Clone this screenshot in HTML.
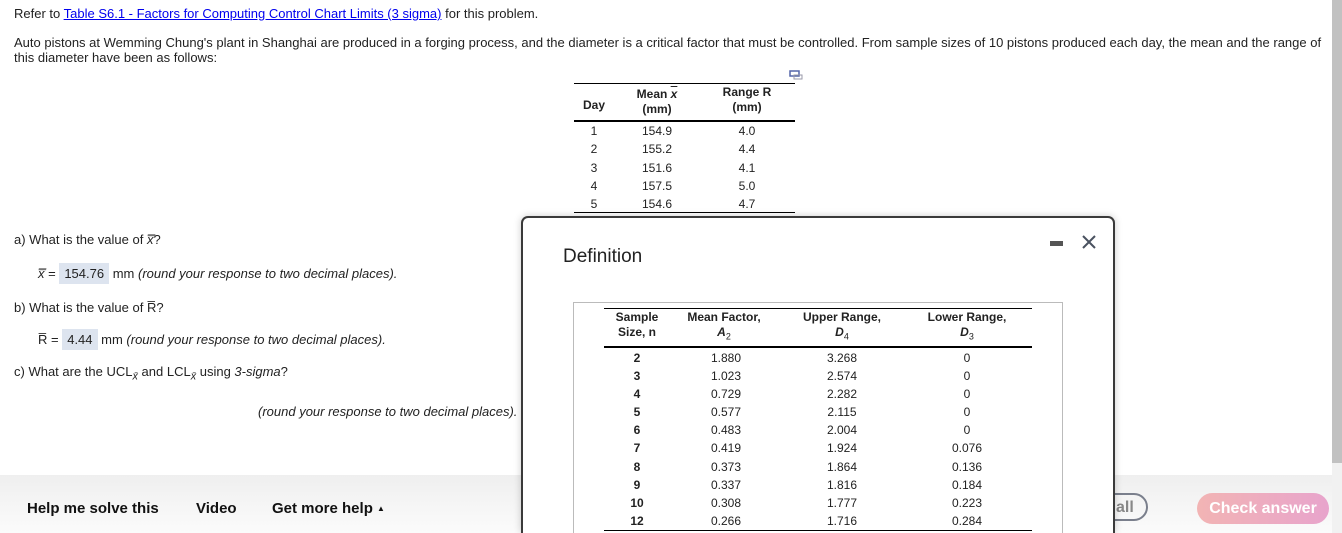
<!DOCTYPE html>
<html style="overflow:hidden;height:533px"><head><style>
body{margin:0;width:1342px;height:533px;overflow:hidden;position:relative;font-family:"Liberation Sans",Arial,sans-serif;font-size:13px;color:#222;background:#fff}
.a{position:absolute;white-space:nowrap}
.c{position:absolute;transform:translateX(-50%);text-align:center;white-space:nowrap;font-size:12px}
.ln{position:absolute;background:#000}
.box{background:#dde4ef;padding:3px 5px}
i{font-style:italic}
</style></head><body>
<div class="a" style="left:14px;top:6px">Refer to <span style="color:#0000ee;text-decoration:underline">Table S6.1 - Factors for Computing Control Chart Limits (3 sigma)</span> for this problem.</div>
<div class="a" style="left:14px;top:35px;line-height:15px">Auto pistons at Wemming Chung's plant in Shanghai are produced in a forging process, and the diameter is a critical factor that must be controlled. From sample sizes of 10 pistons produced each day, the mean and the range of<br>this diameter have been as follows:</div>
<svg class="a" style="left:789px;top:70px" width="14" height="10"><rect x="1" y="1" width="9" height="5" fill="none" stroke="#5566aa" stroke-width="1.5"/><rect x="5" y="5" width="8" height="4" fill="none" stroke="#99a" stroke-width="1"/></svg>
<div class="ln" style="left:574px;top:83px;width:221px;height:1px"></div>
<div class="ln" style="left:574px;top:120px;width:221px;height:2px"></div>
<div class="ln" style="left:574px;top:212px;width:221px;height:1px"></div>
<div class="c" style="left:594px;top:98px;font-weight:bold">Day</div>
<div class="c" style="left:657px;top:87px;font-weight:bold;line-height:15px">Mean <i style="text-decoration:overline">x</i><br>(mm)</div>
<div class="c" style="left:747px;top:85px;font-weight:bold;line-height:15px">Range R<br>(mm)</div>
<div class="c" style="left:594px;top:122px;line-height:18.3px">1<br>2<br>3<br>4<br>5</div>
<div class="c" style="left:657px;top:122px;line-height:18.3px">154.9<br>155.2<br>151.6<br>157.5<br>154.6</div>
<div class="c" style="left:747px;top:122px;line-height:18.3px">4.0<br>4.4<br>4.1<br>5.0<br>4.7</div>

<div class="a" style="left:14px;top:232px">a) What is the value of <i>x̿</i>?</div>
<div class="a" style="left:38px;top:266px"><i>x̿</i> = <span class="box">154.76</span> mm <i>(round your response to two decimal places).</i></div>
<div class="a" style="left:14px;top:300px">b) What is the value of R̅?</div>
<div class="a" style="left:38px;top:332px">R̅ = <span class="box">4.44</span> mm <i>(round your response to two decimal places).</i></div>
<div class="a" style="left:14px;top:364px">c) What are the UCL<sub><i>x̄</i></sub> and LCL<sub><i>x̄</i></sub> using <i>3-sigma</i>?</div>
<div class="a" style="left:258px;top:404px"><i>(round your response to two decimal places).</i></div>

<div class="a" style="left:0;top:475px;width:1332px;height:58px;background:linear-gradient(#efefef,#fbfbfb)"></div>
<div class="a" style="left:27px;top:500px;font-size:15px;font-weight:bold;color:#111">Help me solve this</div>
<div class="a" style="left:196px;top:500px;font-size:15px;font-weight:bold;color:#111">Video</div>
<div class="a" style="left:272px;top:500px;font-size:15px;font-weight:bold;color:#111">Get more help <span style="font-size:8px;vertical-align:2px">▲</span></div>
<div class="a" style="left:1090px;top:493px;width:58px;height:28px;border:2px solid #7a7f8c;border-radius:16px;box-sizing:border-box"></div>
<div class="a" style="left:1116px;top:499px;font-size:16px;font-weight:bold;color:#888">all</div>
<div class="a" style="left:1197px;top:493px;width:132px;height:31px;border-radius:16px;background:linear-gradient(90deg,#f2b4b4,#e8a4cc);color:#fff;font-size:16px;font-weight:bold;text-align:center;line-height:31px">Check answer</div>
<div class="a" style="left:1332px;top:0;width:10px;height:533px;background:#f1f1f1"></div>
<div class="a" style="left:1332px;top:0;width:10px;height:463px;background:#c1c1c1"></div>

<div class="a" style="left:521px;top:216px;width:594px;height:317px;border:2px solid #3a3a3a;border-bottom:none;border-radius:7px 7px 0 0;background:#fff;box-sizing:border-box;box-shadow:0 0 8px rgba(0,0,0,.2)"></div>
<div class="a" style="left:563px;top:246px;font-size:19px;color:#222">Definition</div>
<div class="a" style="left:1050px;top:241px;width:13px;height:5px;background:#555"></div>
<svg class="a" style="left:1081px;top:234px" width="16" height="16"><path d="M2 2L14 14M14 2L2 14" stroke="#4a5260" stroke-width="2"/></svg>
<div class="a" style="left:573px;top:302px;width:490px;height:240px;border:1px solid #bbb;box-sizing:border-box"></div>
<div class="ln" style="left:604px;top:308px;width:428px;height:1px"></div>
<div class="ln" style="left:604px;top:346px;width:428px;height:2px"></div>
<div class="ln" style="left:604px;top:530px;width:428px;height:1px"></div>
<div class="c" style="left:637px;top:310px;font-weight:bold;line-height:15px">Sample<br>Size, n</div>
<div class="c" style="left:724px;top:310px;font-weight:bold;line-height:15px">Mean Factor,<br><i>A</i><sub style="font-size:9px;font-weight:normal">2</sub></div>
<div class="c" style="left:842px;top:310px;font-weight:bold;line-height:15px">Upper Range,<br><i>D</i><sub style="font-size:9px;font-weight:normal">4</sub></div>
<div class="c" style="left:967px;top:310px;font-weight:bold;line-height:15px">Lower Range,<br><i>D</i><sub style="font-size:9px;font-weight:normal">3</sub></div>
<div class="c" style="left:637px;top:349px;line-height:18.1px;font-weight:bold">2<br>3<br>4<br>5<br>6<br>7<br>8<br>9<br>10<br>12</div>
<div class="c" style="left:726px;top:349px;line-height:18.1px">1.880<br>1.023<br>0.729<br>0.577<br>0.483<br>0.419<br>0.373<br>0.337<br>0.308<br>0.266</div>
<div class="c" style="left:842px;top:349px;line-height:18.1px">3.268<br>2.574<br>2.282<br>2.115<br>2.004<br>1.924<br>1.864<br>1.816<br>1.777<br>1.716</div>
<div class="c" style="left:967px;top:349px;line-height:18.1px">0<br>0<br>0<br>0<br>0<br>0.076<br>0.136<br>0.184<br>0.223<br>0.284</div>
</body></html>
